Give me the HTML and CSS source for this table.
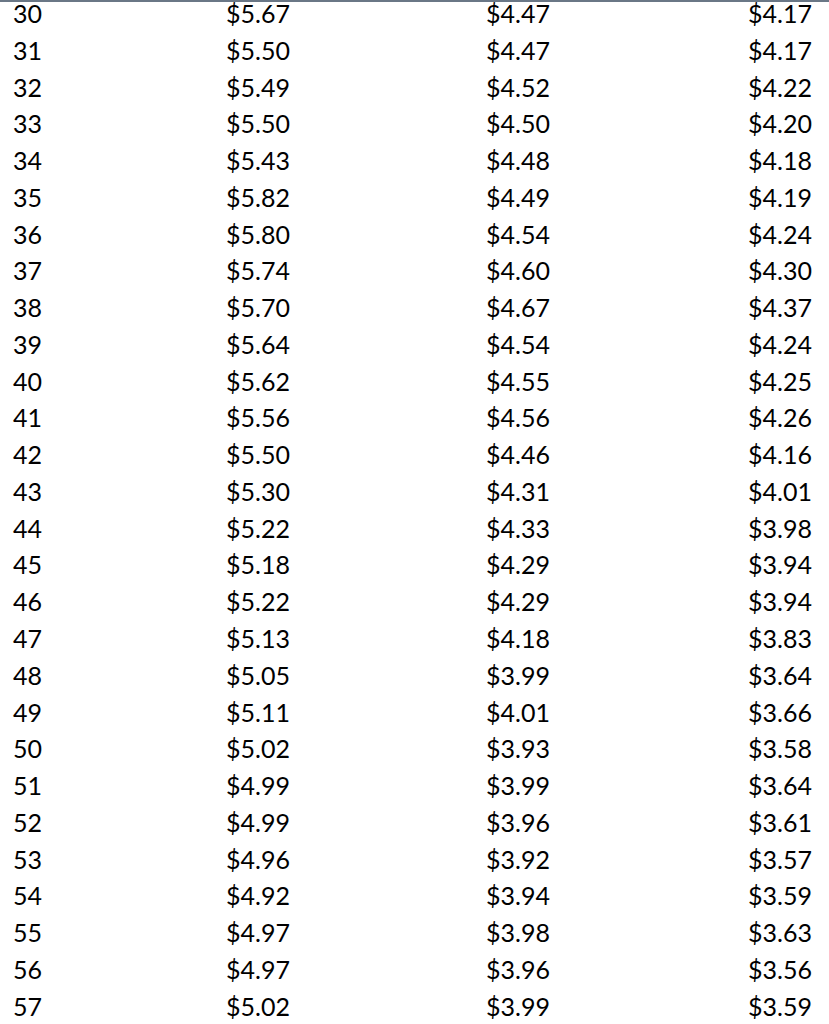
FILE: index.html
```html
<!DOCTYPE html>
<html>
<head>
<meta charset="utf-8">
<link rel="stylesheet" href="styles.css">
</head>
<body>
<div class="sheet">
  <div class="grid">
    <div>30</div><div>$5.67</div><div>$4.47</div><div>$4.17</div>
    <div>31</div><div>$5.50</div><div>$4.47</div><div>$4.17</div>
    <div>32</div><div>$5.49</div><div>$4.52</div><div>$4.22</div>
    <div>33</div><div>$5.50</div><div>$4.50</div><div>$4.20</div>
    <div>34</div><div>$5.43</div><div>$4.48</div><div>$4.18</div>
    <div>35</div><div>$5.82</div><div>$4.49</div><div>$4.19</div>
    <div>36</div><div>$5.80</div><div>$4.54</div><div>$4.24</div>
    <div>37</div><div>$5.74</div><div>$4.60</div><div>$4.30</div>
    <div>38</div><div>$5.70</div><div>$4.67</div><div>$4.37</div>
    <div>39</div><div>$5.64</div><div>$4.54</div><div>$4.24</div>
    <div>40</div><div>$5.62</div><div>$4.55</div><div>$4.25</div>
    <div>41</div><div>$5.56</div><div>$4.56</div><div>$4.26</div>
    <div>42</div><div>$5.50</div><div>$4.46</div><div>$4.16</div>
    <div>43</div><div>$5.30</div><div>$4.31</div><div>$4.01</div>
    <div>44</div><div>$5.22</div><div>$4.33</div><div>$3.98</div>
    <div>45</div><div>$5.18</div><div>$4.29</div><div>$3.94</div>
    <div>46</div><div>$5.22</div><div>$4.29</div><div>$3.94</div>
    <div>47</div><div>$5.13</div><div>$4.18</div><div>$3.83</div>
    <div>48</div><div>$5.05</div><div>$3.99</div><div>$3.64</div>
    <div>49</div><div>$5.11</div><div>$4.01</div><div>$3.66</div>
    <div>50</div><div>$5.02</div><div>$3.93</div><div>$3.58</div>
    <div>51</div><div>$4.99</div><div>$3.99</div><div>$3.64</div>
    <div>52</div><div>$4.99</div><div>$3.96</div><div>$3.61</div>
    <div>53</div><div>$4.96</div><div>$3.92</div><div>$3.57</div>
    <div>54</div><div>$4.92</div><div>$3.94</div><div>$3.59</div>
    <div>55</div><div>$4.97</div><div>$3.98</div><div>$3.63</div>
    <div>56</div><div>$4.97</div><div>$3.96</div><div>$3.56</div>
    <div>57</div><div>$5.02</div><div>$3.99</div><div>$3.59</div>
  </div>
</div>
</body>
</html>
```
FILE: styles.css
```css
html, body {
  margin: 0;
  padding: 0;
  background: #ffffff;
}
.sheet {
  width: 829px;
  height: 1024px;
  overflow: hidden;
  border-top: 2px solid #6a7786;
  box-sizing: border-box;
}
.grid {
  display: grid;
  grid-template-columns: 213px 260px 262px 1fr;
  grid-auto-rows: 36.78px;
  padding-left: 13px;
  font-family: Lato, "Open Sans", sans-serif;
  font-size: 25px;
  line-height: 22.6px;
  color: #000000;
}
```
